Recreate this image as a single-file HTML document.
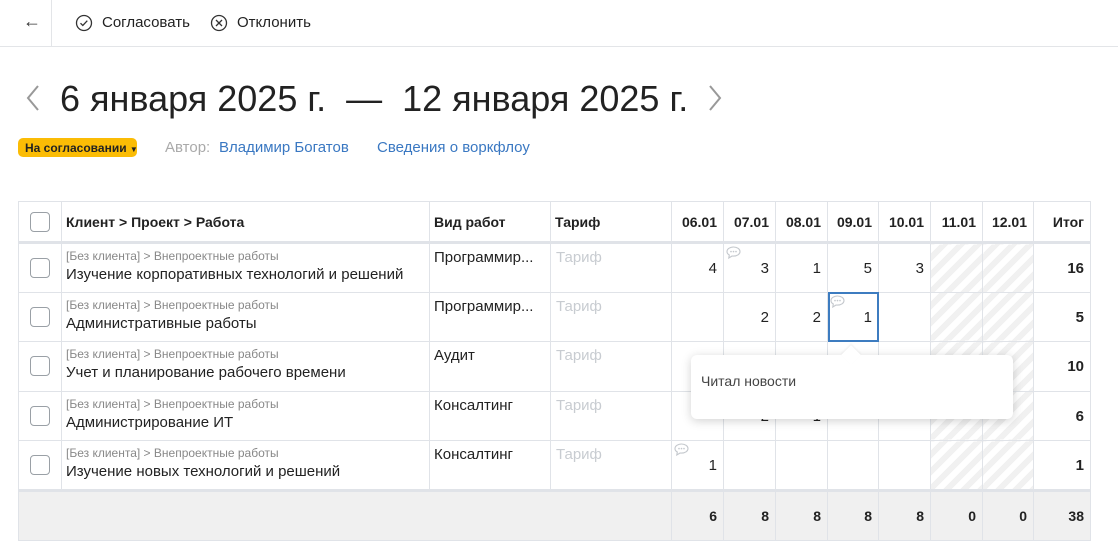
<!DOCTYPE html>
<html><head><meta charset="utf-8"><style>
*{box-sizing:border-box;margin:0;padding:0}
body{width:1118px;height:553px;overflow:hidden;background:#fff;font-family:"Liberation Sans","DejaVu Sans",sans-serif;color:#222;position:relative}
.abs{position:absolute}
.top{position:absolute;left:0;top:0;width:1118px;height:47px;border-bottom:1px solid #e3e5e8}
table{position:absolute;left:18px;top:201px;border-collapse:collapse;table-layout:fixed;width:1073px}
td,th{border:1px solid #e0e3e8;font-size:14px;vertical-align:top;position:relative}
th{height:41px;font-weight:bold;text-align:left;vertical-align:middle;padding-left:4px;border-bottom:3px solid #e0e3e8}
th.n{text-align:right;padding-right:6px}
tbody td{height:49.6px}
.cb{width:20px;height:20px;border:1px solid #9aa0a6;border-radius:4px;margin:14px 0 0 11px;background:#fff}
th .cb{margin:0 0 0 7px}
.sub{font-size:12px;color:#888;margin:5px 0 0 4px;white-space:nowrap}
.main{font-size:15px;margin:3px 0 0 4px;white-space:nowrap}
.vw{font-size:15px;padding:5px 0 0 4px;white-space:nowrap}
.tf{font-size:15px;color:#c8ccd1;padding:5px 0 0 5px}
.num{text-align:right;padding:16px 6px 0 0;font-size:15px}
.b{font-weight:bold}
.h{background:repeating-linear-gradient(135deg,#fff 0 6px,#f1f1f1 6px 12px)}
tfoot td{background:#f0f0f0;height:50px;vertical-align:middle;text-align:right;padding-right:6px;font-weight:bold;font-size:14px;border-top:3px solid #e0e3e8}
.bub{position:absolute;left:2px;top:2px}
</style></head><body>
<div class="top">
 <div class="abs" style="left:23px;top:11px;font-size:18px;color:#333">←</div>
 <div class="abs" style="left:51px;top:0;width:1px;height:47px;background:#e3e5e8"></div>
 <svg class="abs" style="left:75px;top:14px" width="18" height="18" viewBox="0 0 18 18"><circle cx="9" cy="9" r="7.5" fill="none" stroke="#333" stroke-width="1.3"/><path d="M5.5 9.2l2.3 2.3 4.5-4.8" fill="none" stroke="#333" stroke-width="1.3"/></svg>
 <div class="abs" style="left:102px;top:14px;font-size:15px">Согласовать</div>
 <svg class="abs" style="left:210px;top:14px" width="18" height="18" viewBox="0 0 18 18"><circle cx="9" cy="9" r="7.5" fill="none" stroke="#333" stroke-width="1.3"/><path d="M6 6l6 6M12 6l-6 6" stroke="#333" stroke-width="1.3"/></svg>
 <div class="abs" style="left:237px;top:14px;font-size:15px">Отклонить</div>
</div>
<svg class="abs" style="left:24px;top:84px" width="18" height="28"><path d="M14 2L4 14l10 12" fill="none" stroke="#999" stroke-width="2"/></svg>
<div class="abs" style="left:60px;top:78px;font-size:36px;color:#222;white-space:nowrap">6 января 2025 г. &nbsp;— &nbsp;12 января 2025 г.</div>
<svg class="abs" style="left:706px;top:84px" width="18" height="28"><path d="M4 2l10 12L4 26" fill="none" stroke="#999" stroke-width="2"/></svg>
<div class="abs" style="left:18px;top:138px;width:119px;height:19px;background:#fbbc05;border-radius:5px;font-size:12px;font-weight:bold;padding:3px 0 0 7px;white-space:nowrap">На согласовании <span style="font-size:8px">▼</span></div>
<div class="abs" style="left:165px;top:139px;font-size:15px;color:#aaa">Автор:</div>
<div class="abs" style="left:219px;top:139px;font-size:15px;color:#3a78c2">Владимир Богатов</div>
<div class="abs" style="left:377px;top:139px;font-size:15px;color:#3a78c2">Сведения о воркфлоу</div>
<table>
<colgroup><col style="width:43px"><col style="width:368px"><col style="width:121px"><col style="width:121px"><col style="width:52px"><col style="width:52px"><col style="width:52px"><col style="width:51px"><col style="width:52px"><col style="width:52px"><col style="width:51px"><col style="width:57px"></colgroup>
<thead><tr><th><div class="cb"></div></th><th>Клиент &gt; Проект &gt; Работа</th><th>Вид работ</th><th>Тариф</th><th class="n">06.01</th><th class="n">07.01</th><th class="n">08.01</th><th class="n">09.01</th><th class="n">10.01</th><th class="n">11.01</th><th class="n">12.01</th><th class="n">Итог</th></tr></thead>
<tbody>
<tr><td><div class="cb"></div></td><td><div class="sub">[Без клиента] &gt; Внепроектные работы</div><div class="main">Изучение корпоративных технологий и решений</div></td><td><div class="vw">Программир...</div></td><td><div class="tf">Тариф</div></td><td class="num">4</td><td class="num"><svg class="bub" width="15" height="13" viewBox="0 0 15 13"><path d="M7.5 1C3.9 1 1 3.1 1 5.6c0 1.4.9 2.6 2.3 3.4L2.8 12l3.3-2c.5.1.9.1 1.4.1 3.6 0 6.5-2 6.5-4.5S11.1 1 7.5 1z" fill="none" stroke="#c4c8cd" stroke-width="1.1"/><circle cx="5" cy="5.6" r=".8" fill="#c4c8cd"/><circle cx="7.5" cy="5.6" r=".8" fill="#c4c8cd"/><circle cx="10" cy="5.6" r=".8" fill="#c4c8cd"/></svg>3</td><td class="num">1</td><td class="num">5</td><td class="num">3</td><td class="h"></td><td class="h"></td><td class="num b">16</td></tr>
<tr><td><div class="cb"></div></td><td><div class="sub">[Без клиента] &gt; Внепроектные работы</div><div class="main">Административные работы</div></td><td><div class="vw">Программир...</div></td><td><div class="tf">Тариф</div></td><td class="num"></td><td class="num">2</td><td class="num">2</td><td class="num" style="outline:2px solid #3d7cc0;outline-offset:-2px"><svg class="bub" width="15" height="13" viewBox="0 0 15 13"><path d="M7.5 1C3.9 1 1 3.1 1 5.6c0 1.4.9 2.6 2.3 3.4L2.8 12l3.3-2c.5.1.9.1 1.4.1 3.6 0 6.5-2 6.5-4.5S11.1 1 7.5 1z" fill="none" stroke="#c4c8cd" stroke-width="1.1"/><circle cx="5" cy="5.6" r=".8" fill="#c4c8cd"/><circle cx="7.5" cy="5.6" r=".8" fill="#c4c8cd"/><circle cx="10" cy="5.6" r=".8" fill="#c4c8cd"/></svg>1</td><td class="num"></td><td class="h"></td><td class="h"></td><td class="num b">5</td></tr>
<tr><td><div class="cb"></div></td><td><div class="sub">[Без клиента] &gt; Внепроектные работы</div><div class="main">Учет и планирование рабочего времени</div></td><td><div class="vw">Аудит</div></td><td><div class="tf">Тариф</div></td><td class="num"></td><td class="num"></td><td class="num"></td><td class="num"></td><td class="num"></td><td class="h"></td><td class="h"></td><td class="num b">10</td></tr>
<tr><td><div class="cb"></div></td><td><div class="sub">[Без клиента] &gt; Внепроектные работы</div><div class="main">Администрирование ИТ</div></td><td><div class="vw">Консалтинг</div></td><td><div class="tf">Тариф</div></td><td class="num"></td><td class="num">2</td><td class="num">1</td><td class="num"></td><td class="num"></td><td class="h"></td><td class="h"></td><td class="num b">6</td></tr>
<tr><td><div class="cb"></div></td><td><div class="sub">[Без клиента] &gt; Внепроектные работы</div><div class="main">Изучение новых технологий и решений</div></td><td><div class="vw">Консалтинг</div></td><td><div class="tf">Тариф</div></td><td class="num"><svg class="bub" width="15" height="13" viewBox="0 0 15 13"><path d="M7.5 1C3.9 1 1 3.1 1 5.6c0 1.4.9 2.6 2.3 3.4L2.8 12l3.3-2c.5.1.9.1 1.4.1 3.6 0 6.5-2 6.5-4.5S11.1 1 7.5 1z" fill="none" stroke="#c4c8cd" stroke-width="1.1"/><circle cx="5" cy="5.6" r=".8" fill="#c4c8cd"/><circle cx="7.5" cy="5.6" r=".8" fill="#c4c8cd"/><circle cx="10" cy="5.6" r=".8" fill="#c4c8cd"/></svg>1</td><td class="num"></td><td class="num"></td><td class="num"></td><td class="num"></td><td class="h"></td><td class="h"></td><td class="num b">1</td></tr>
</tbody>
<tfoot><tr><td colspan="4" style="border-left:1px solid #e0e3e8;border-right:none"></td><td>6</td><td>8</td><td>8</td><td>8</td><td>8</td><td>0</td><td>0</td><td>38</td></tr></tfoot>
</table>
<div class="abs" style="left:691px;top:355px;width:322px;height:64px;background:#fff;border-radius:6px;box-shadow:0 2px 10px rgba(0,0,0,.18);font-size:14px;color:#444;padding:18px 0 0 10px">Читал новости</div>
<div class="abs" style="left:844px;top:348px;width:14px;height:14px;background:#fff;transform:rotate(45deg);box-shadow:-1px -1px 2px rgba(0,0,0,.06)"></div>
</body></html>
